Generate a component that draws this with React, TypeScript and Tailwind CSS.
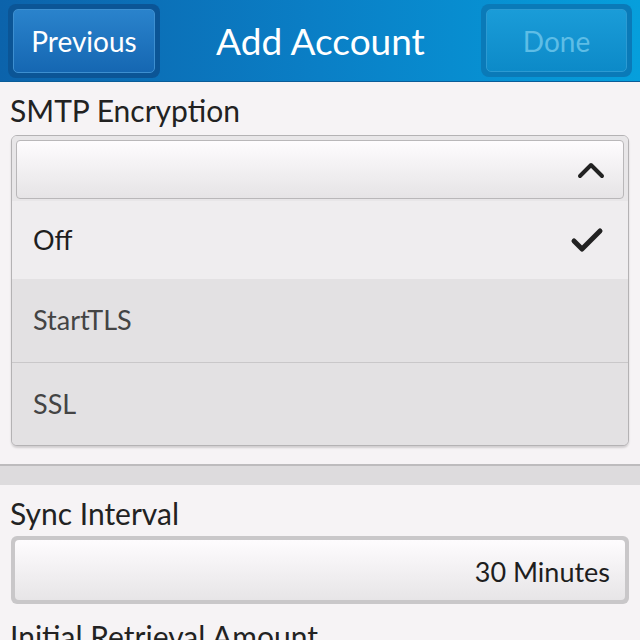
import React from 'react';

const font = { fontFamily: 'Lato, "Open Sans", sans-serif' };

function Chevron() {
  return (
    <svg width="28" height="18" viewBox="0 0 28 18">
      <path d="M3 15 L14 4 L25 15" fill="none" stroke="#222" strokeWidth="4" strokeLinecap="round" strokeLinejoin="round" />
    </svg>
  );
}

function Check() {
  return (
    <svg width="34" height="28" viewBox="0 0 34 28">
      <path d="M4 15 L12 23 L30 5" fill="none" stroke="#222" strokeWidth="5" strokeLinecap="round" strokeLinejoin="round" />
    </svg>
  );
}

export default function App() {
  const options = [
    { label: 'Off', selected: true, h: 'h-[78px]' },
    { label: 'StartTLS', selected: false, h: 'h-[84px]' },
    { label: 'SSL', selected: false, h: 'h-[82px]' },
  ];

  return (
    <div className="w-[640px] h-[640px] overflow-hidden bg-[#f6f3f5]" style={font}>
      {/* title bar */}
      <div className="h-[82px] flex items-center justify-between px-[8px] bg-gradient-to-r from-[#0c63ab] via-[#0a7fc6] to-[#069fdc] border-b border-[#0a5c98]">
        <div className="w-[152px] h-[74px] rounded-[8px] bg-[#0b5596] p-[5px]">
          <div className="h-full rounded-[5px] border border-[#3d8fd0] bg-gradient-to-b from-[#2a83cc] to-[#1567b2] flex items-center justify-center text-white text-[28px]">
            Previous
          </div>
        </div>
        <div className="text-white text-[37px] leading-none">Add Account</div>
        <div className="w-[151px] h-[73px] rounded-[8px] bg-[#0a7ab8] p-[5px]">
          <div className="h-full rounded-[5px] border border-[#2c9ad2] bg-gradient-to-b from-[#1a9cd8] to-[#0c8ac8] flex items-center justify-center text-[#5ebde6] text-[28px]">
            Done
          </div>
        </div>
      </div>

      {/* SMTP encryption */}
      <div className="h-[53px] px-[10px] flex items-end pb-[10px] text-[30px] text-[#222] leading-none">SMTP Encryption</div>
      <div className="mx-[11px] rounded-[6px] border border-[#b4b2b4] bg-[#eeecee] overflow-hidden shadow-[0_2px_2px_rgba(0,0,0,0.15)]">
        <div className="px-[4px] pt-[4px] pb-[2px] bg-[#e8e6e8]">
          <div className="h-[59px] rounded-[4px] border border-[#b9b7b9] bg-gradient-to-b from-[#fefcfe] to-[#e6e4e6] flex items-center justify-end pr-[18px]">
            <Chevron />
          </div>
        </div>
        {options.map((o, i) => (
          <div
            key={o.label}
            className={`${o.h} flex items-center justify-between pl-[21px] pr-[24px] text-[27px] ${
              o.selected ? 'bg-[#efedef] text-[#1e1e1e]' : 'bg-[#e3e1e3] text-[#444]'
            } ${i === 1 ? 'border-b border-[#c9c7c9]' : ''}`}
          >
            <span>{o.label}</span>
            {o.selected && <Check />}
          </div>
        ))}
      </div>

      {/* divider band */}
      <div className="mt-[18px] h-[21px] bg-[#dddbdd] border-t-2 border-[#bdbbbd]" />

      {/* sync interval */}
      <div className="h-[51px] px-[10px] flex items-end pb-[8px] text-[30px] text-[#222] leading-none">Sync Interval</div>
      <div className="mx-[11px] h-[68px] rounded-[6px] bg-[#c9c7c9] p-[4px]">
        <div className="h-full rounded-[4px] bg-gradient-to-b from-[#fefcfe] to-[#e7e5e7] flex items-center justify-end pr-[15px] pt-[4px] text-[27px] text-[#1e1e1e]">
          30 Minutes
        </div>
      </div>
      <div className="px-[10px] pt-[17px] text-[30px] text-[#222] leading-none">Initial Retrieval Amount</div>
    </div>
  );
}
